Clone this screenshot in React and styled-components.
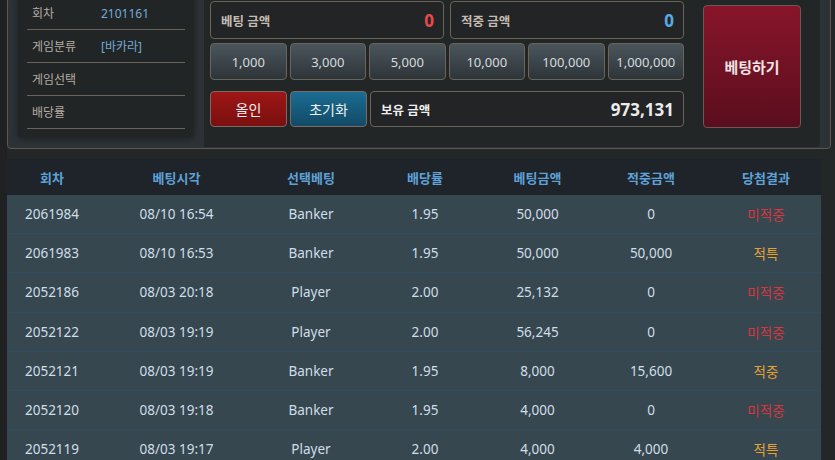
import styled, { createGlobalStyle } from 'styled-components';

const GlobalStyle = createGlobalStyle`
    html, body {
        margin: 0;
        padding: 0;
        background: #242728;
        font-family: "Noto Sans", "Noto Sans CJK KR", sans-serif;
        overflow: hidden;
    }
`;

const chips = ['1,000', '3,000', '5,000', '10,000', '100,000', '1,000,000'];

const infoRows = [
    { label: '회차', value: '2101161' },
    { label: '게임분류', value: '[바카라]' },
    { label: '게임선택', value: '' },
    { label: '배당률', value: '' },
];

const columns = ['회차', '베팅시각', '선택베팅', '배당률', '베팅금액', '적중금액', '당첨결과'];

const history = [
    ['2061984', '08/10 16:54', 'Banker', '1.95', '50,000', '0', '미적중'],
    ['2061983', '08/10 16:53', 'Banker', '1.95', '50,000', '50,000', '적특'],
    ['2052186', '08/03 20:18', 'Player', '2.00', '25,132', '0', '미적중'],
    ['2052122', '08/03 19:19', 'Player', '2.00', '56,245', '0', '미적중'],
    ['2052121', '08/03 19:19', 'Banker', '1.95', '8,000', '15,600', '적중'],
    ['2052120', '08/03 19:18', 'Banker', '1.95', '4,000', '0', '미적중'],
    ['2052119', '08/03 19:17', 'Player', '2.00', '4,000', '4,000', '적특'],
];

const App = () => {
    return (
        <Page>
            <GlobalStyle />
            <TopPanel>
                <InfoSide>
                    <InfoBox>
                        {infoRows.map(row => (
                            <InfoRow key={row.label}>
                                <InfoLabel>{row.label}</InfoLabel>
                                <InfoValue>{row.value}</InfoValue>
                            </InfoRow>
                        ))}
                    </InfoBox>
                </InfoSide>

                <BetPanel>
                    <BetGrid>
                        <AmountRow>
                            <AmountBox>
                                <AmountLabel>베팅 금액</AmountLabel>
                                <AmountValue $color="#e84a4a">0</AmountValue>
                            </AmountBox>
                            <AmountBox>
                                <AmountLabel>적중 금액</AmountLabel>
                                <AmountValue $color="#5aaae6">0</AmountValue>
                            </AmountBox>
                        </AmountRow>

                        <ChipRow>
                            {chips.map(c => (
                                <ChipButton key={c}>{c}</ChipButton>
                            ))}
                        </ChipRow>

                        <ActionRow>
                            <ActionButton $variant="red">올인</ActionButton>
                            <ActionButton $variant="blue">초기화</ActionButton>
                            <AmountBox>
                                <AmountLabel $bright>보유 금액</AmountLabel>
                                <AmountValue $color="#ececec">973,131</AmountValue>
                            </AmountBox>
                        </ActionRow>
                    </BetGrid>

                    <SubmitButton>베팅하기</SubmitButton>
                </BetPanel>
            </TopPanel>

            <Table>
                <HeadRow>
                    {columns.map(col => (
                        <HeadCell key={col}>{col}</HeadCell>
                    ))}
                </HeadRow>
                {history.map(row => (
                    <BodyRow key={row[0]}>
                        {row.map((cell, i) => (
                            <BodyCell key={i} $result={i === 6 ? cell : null}>
                                {cell}
                            </BodyCell>
                        ))}
                    </BodyRow>
                ))}
            </Table>
        </Page>
    );
};

export default App;

const Page = styled.div`
    width: 835px;
    height: 460px;
    overflow: hidden;
    background: linear-gradient(to right, #1f2122 0, #1f2122 7px, #242728 7px);
`;

const TopPanel = styled.div`
    display: flex;
    width: 812px;
    margin: -12px 0 0 7px;
    border: 1px solid #5e5850;
    border-radius: 4px;
    background: #2c3235;
    padding: 0 10px 1px 0;
`;

const InfoSide = styled.div`
    width: 176px;
    padding: 2px 10px 10px 10px;
`;

const InfoBox = styled.div`
    background: #222526;
    border-radius: 4px;
    box-shadow: 0 2px 6px rgba(0, 0, 0, 0.35);
    padding: 6px 9px 8px;
`;

const InfoRow = styled.div`
    display: flex;
    align-items: center;
    height: 32px;
    padding-left: 5px;
    border-bottom: 1px solid #6a6358;
    font-size: 12px;
`;

const InfoLabel = styled.div`
    width: 69px;
    color: #b4aca2;
`;

const InfoValue = styled.div`
    color: #72acd6;
`;

const BetPanel = styled.div`
    flex: 1;
    display: flex;
    gap: 19px;
    background: #232627;
    border-radius: 0 0 4px 0;
    padding: 12px 10px 19px 6px;
`;

const BetGrid = styled.div`
    width: 474px;
    display: flex;
    flex-direction: column;
`;

const AmountRow = styled.div`
    display: grid;
    grid-template-columns: 1fr 1fr;
    gap: 6px;
    height: 38px;
`;

const AmountBox = styled.div`
    flex: 1;
    display: flex;
    align-items: center;
    justify-content: space-between;
    background: #222425;
    border: 1px solid #6a6459;
    border-radius: 4px;
    padding: 0 9px 0 10px;
    box-sizing: border-box;
`;

const AmountLabel = styled.span`
    font-size: 12.5px;
    font-weight: 700;
    color: ${p => (p.$bright ? '#f0f0f0' : '#c4bcb2')};
`;

const AmountValue = styled.span`
    font-size: 17px;
    font-weight: 700;
    color: ${p => p.$color};
`;

const ChipRow = styled.div`
    display: grid;
    grid-template-columns: repeat(6, 1fr);
    gap: 3px;
    height: 37px;
    margin-top: 4px;
`;

const ChipButton = styled.button`
    font-family: inherit;
    font-size: 13px;
    color: #d6dbde;
    background: linear-gradient(to bottom, #4a555c, #2e3539);
    border: 1px solid #6a6459;
    border-radius: 4px;
    padding: 0;
    cursor: pointer;
`;

const ActionRow = styled.div`
    display: flex;
    gap: 3px;
    height: 36px;
    margin-top: 11px;
`;

const ActionButton = styled.button`
    width: 77px;
    font-family: inherit;
    font-size: 14px;
    color: #eef2f4;
    background: ${p =>
        p.$variant === 'red'
            ? 'linear-gradient(to bottom, #9e1616, #7a0f0f)'
            : 'linear-gradient(to bottom, #1b6c92, #124a66)'};
    border: 1px solid #7a6a62;
    border-radius: 4px;
    padding: 0;
    cursor: pointer;
`;

const SubmitButton = styled.button`
    width: 98px;
    height: 123px;
    margin-top: 4px;
    font-family: inherit;
    font-size: 15px;
    font-weight: 700;
    color: #f2e4e4;
    background: linear-gradient(to bottom, #88152a, #5a0e1e);
    border: 1px solid #6e5853;
    border-radius: 4px;
    cursor: pointer;
`;

const grid = '90px 159px 110px 118px 107px 120px 110px';

const Table = styled.div`
    width: 814px;
    margin: 10px 0 0 7px;
`;

const HeadRow = styled.div`
    display: grid;
    grid-template-columns: ${grid};
    height: 36px;
    align-items: center;
    background: #1e2429;
`;

const HeadCell = styled.div`
    text-align: center;
    font-size: 13px;
    font-weight: 700;
    color: #5ea2d8;
`;

const BodyRow = styled.div`
    display: grid;
    grid-template-columns: ${grid};
    height: 38.2px;
    align-items: center;
    background: #374750;
    border-bottom: 1px solid #2d4d60;
`;

const resultColor = r => {
    if (r === '미적중') return '#d8363e';
    if (r) return '#e6a234';
    return '#d0dee8';
};

const BodyCell = styled.div`
    text-align: center;
    font-size: 13.5px;
    color: ${p => resultColor(p.$result)};
`;
